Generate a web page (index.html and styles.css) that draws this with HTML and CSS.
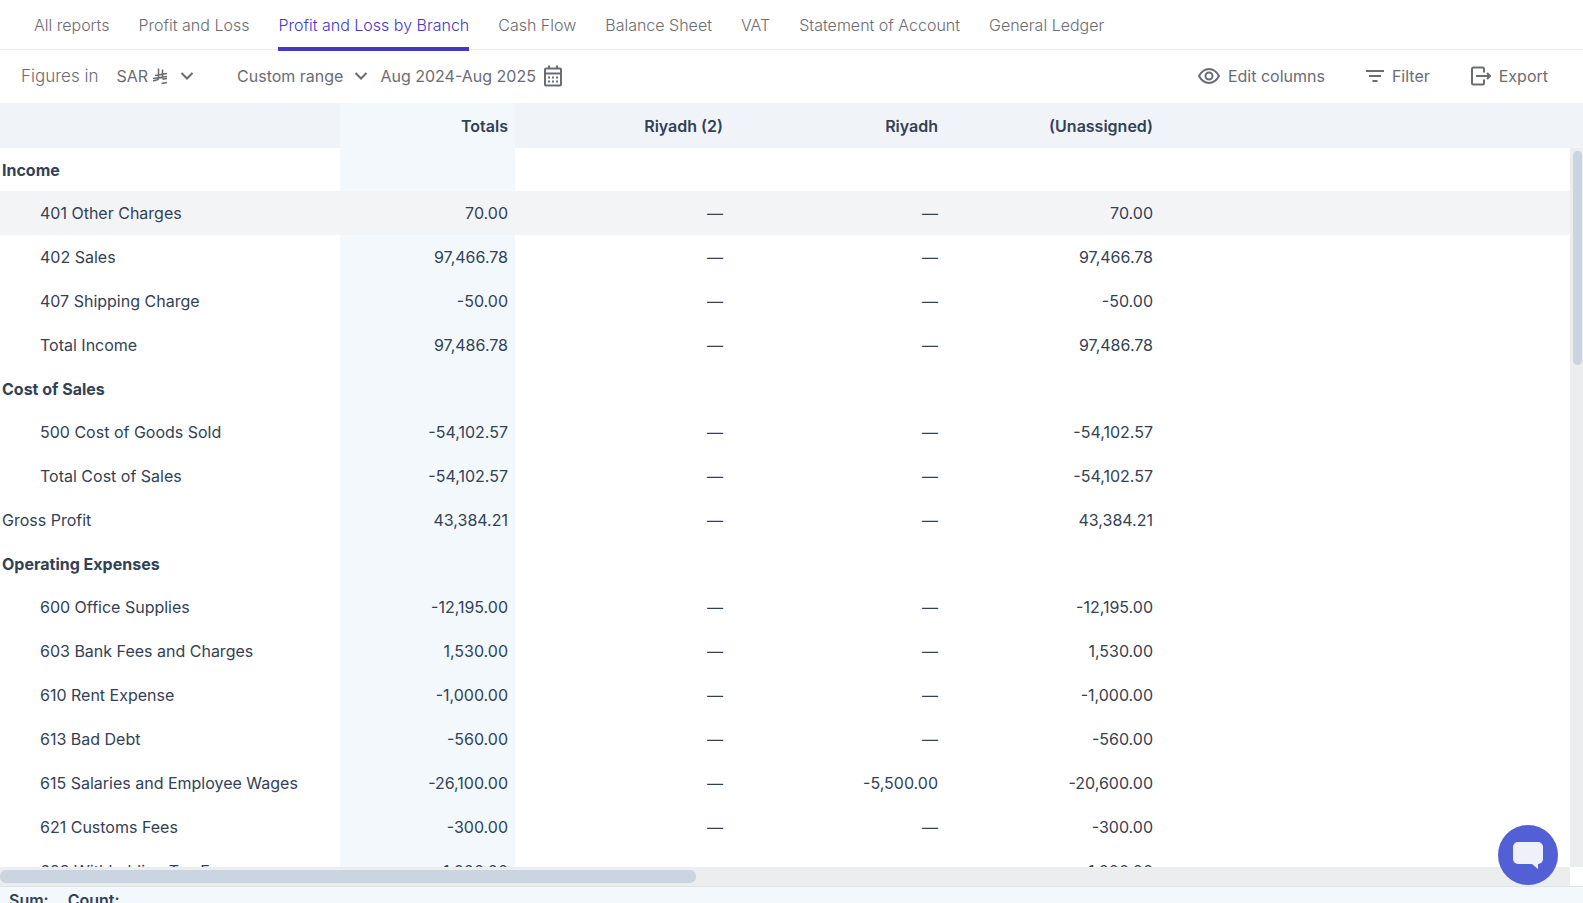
FILE: index.html
```html
<!DOCTYPE html>
<html lang="en">
<head>
    <meta charset="UTF-8">
    <meta name="viewport" content="width=device-width, initial-scale=1.0">
    <title>Profit and Loss by Branch</title>
    <link rel="stylesheet" href="styles.css">
</head>
<body>

    <nav class="tabs">
        <a href="#">All reports</a>
        <a href="#">Profit and Loss</a>
        <a href="#" class="active">Profit and Loss by Branch</a>
        <a href="#">Cash Flow</a>
        <a href="#">Balance Sheet</a>
        <a href="#">VAT</a>
        <a href="#">Statement of Account</a>
        <a href="#">General Ledger</a>
    </nav>

    <div class="toolbar">
        <span class="figures">Figures in</span>
        <button type="button" class="tool currency">
            SAR
            <svg class="riyal" width="16" height="18" viewBox="0 0 16 18"><path d="M6.500 1.500v10q0 1-1 1.300L1 14M10.500 2.500v9M3 8.500L15 6.500M1 11.500L15 9.500M10.500 12.200l4.500-.7M9.500 16.500l5.500-1"/></svg>
            <svg class="chevron" width="14" height="14" viewBox="0 0 14 14"><path d="M1.500 4L7 9.500 12.500 4"/></svg>
        </button>
        <button type="button" class="tool range">
            Custom range
            <svg class="chevron" width="14" height="14" viewBox="0 0 14 14"><path d="M1.500 4L7 9.500 12.500 4"/></svg>
        </button>
        <button type="button" class="tool dates">
            Aug 2024-Aug 2025
            <svg width="18" height="22" viewBox="0 0 18 22"><path d="M2 3.500h14a1 1 0 0 1 1 1v15a1 1 0 0 1-1 1H2a1 1 0 0 1-1-1v-15a1 1 0 0 1 1-1zM1 8.500h16M5 .5v3M13 .5v3"/><path d="M4 12.500h2M8 12.500h2M12 12.500h2M4 16.500h2M8 16.500h2M12 16.500h2"/></svg>
        </button>
        <div class="actions">
            <button type="button" class="tool">
                <svg width="22" height="16" viewBox="0 0 22 16"><path d="M1 8C3.500 3.500 6.500 1 11 1s7.500 2.500 10 7C18.500 12.500 15.500 15 11 15S3.500 12.500 1 8z"/><circle cx="11" cy="8" r="3.500"/></svg>
                Edit columns
            </button>
            <button type="button" class="tool">
                <svg width="18" height="14" viewBox="0 0 18 14"><path d="M0 2h18M3 7h12M6.500 12h5"/></svg>
                Filter
            </button>
            <button type="button" class="tool">
                <svg width="20" height="20" viewBox="0 0 20 20"><path d="M13 6.500V3a1.500 1.500 0 0 0-1.500-1.500h-9A1.500 1.500 0 0 0 1 3v14a1.500 1.500 0 0 0 1.500 1.500h9A1.500 1.500 0 0 0 13 17v-3.500M5 10h14"/><path d="M16 7l3 3-3 3"/></svg>
                Export
            </button>
        </div>
    </div>

    <main class="report">
        <div class="table-area">
            <table>
                <colgroup>
                    <col class="name-col">
                    <col class="totals-col">
                    <col class="branch-col">
                    <col class="branch-col">
                    <col class="branch-col">
                    <col>
                </colgroup>
                <thead>
                    <tr><th></th><th>Totals</th><th>Riyadh (2)</th><th>Riyadh</th><th>(Unassigned)</th><th></th></tr>
                </thead>
                <tbody>
                    <tr class="group"><th>Income</th><td></td><td></td><td></td><td></td><td></td></tr>
                    <tr class="item hovered"><th>401 Other Charges</th><td>70.00</td><td>—</td><td>—</td><td>70.00</td><td></td></tr>
                    <tr class="item"><th>402 Sales</th><td>97,466.78</td><td>—</td><td>—</td><td>97,466.78</td><td></td></tr>
                    <tr class="item"><th>407 Shipping Charge</th><td>-50.00</td><td>—</td><td>—</td><td>-50.00</td><td></td></tr>
                    <tr class="item"><th>Total Income</th><td>97,486.78</td><td>—</td><td>—</td><td>97,486.78</td><td></td></tr>
                    <tr class="group"><th>Cost of Sales</th><td></td><td></td><td></td><td></td><td></td></tr>
                    <tr class="item"><th>500 Cost of Goods Sold</th><td>-54,102.57</td><td>—</td><td>—</td><td>-54,102.57</td><td></td></tr>
                    <tr class="item"><th>Total Cost of Sales</th><td>-54,102.57</td><td>—</td><td>—</td><td>-54,102.57</td><td></td></tr>
                    <tr><th>Gross Profit</th><td>43,384.21</td><td>—</td><td>—</td><td>43,384.21</td><td></td></tr>
                    <tr class="group"><th>Operating Expenses</th><td></td><td></td><td></td><td></td><td></td></tr>
                    <tr class="item"><th>600 Office Supplies</th><td>-12,195.00</td><td>—</td><td>—</td><td>-12,195.00</td><td></td></tr>
                    <tr class="item"><th>603 Bank Fees and Charges</th><td>1,530.00</td><td>—</td><td>—</td><td>1,530.00</td><td></td></tr>
                    <tr class="item"><th>610 Rent Expense</th><td>-1,000.00</td><td>—</td><td>—</td><td>-1,000.00</td><td></td></tr>
                    <tr class="item"><th>613 Bad Debt</th><td>-560.00</td><td>—</td><td>—</td><td>-560.00</td><td></td></tr>
                    <tr class="item"><th>615 Salaries and Employee Wages</th><td>-26,100.00</td><td>—</td><td>-5,500.00</td><td>-20,600.00</td><td></td></tr>
                    <tr class="item"><th>621 Customs Fees</th><td>-300.00</td><td>—</td><td>—</td><td>-300.00</td><td></td></tr>
                    <tr class="item"><th>623 Withholding Tax F</th><td>-1,000.00</td><td>—</td><td>—</td><td>-1,000.00</td><td></td></tr>
                </tbody>
            </table>
        </div>
        <div class="scroll-y"><div class="thumb"></div></div>
        <div class="scroll-x"><div class="thumb"></div></div>
    </main>

    <footer class="summary">
        <span>Sum:</span>
        <span>Count:</span>
    </footer>

    <button type="button" class="chat" aria-label="Open chat">
        <svg width="30" height="28" viewBox="0 0 30 28"><path d="M5 1h20a5 5 0 0 1 5 5v12a5 5 0 0 1-5 5v5l-6-5H5a5 5 0 0 1-5-5V6a5 5 0 0 1 5-5z"/></svg>
    </button>

</body>
</html>
```
FILE: styles.css
```css
* {
    box-sizing: border-box;
}
body {
    margin: 0;
    height: 100vh;
    display: flex;
    flex-direction: column;
    overflow: hidden;
    font-family: Inter, sans-serif;
    font-size: 16px;
    color: #334155;
    background-color: white;
}

/* report tabs */
.tabs {
    display: flex;
    flex: none;
    gap: 29px;
    height: 50px;
    padding: 0 34px;
    border-bottom: 1px solid #ebecef;
}
.tabs a {
    height: 51px;
    line-height: 50px;
    font-weight: 300;
    color: #6b6c72;
    text-decoration: none;
    white-space: nowrap;
}
.tabs .active {
    color: #4338ca;
    border-bottom: 4px solid #4338ca;
}

/* toolbar */
.toolbar {
    display: flex;
    flex: none;
    align-items: center;
    height: 53px;
    padding: 0 35px 2px 21px;
    color: #6b6c72;
}
.figures {
    margin-right: 18px;
    font-size: 17px;
    font-weight: 300;
}
.tool {
    display: flex;
    align-items: center;
    gap: 8px;
    padding: 0;
    border: none;
    background: none;
    font: inherit;
    color: inherit;
    white-space: nowrap;
    cursor: pointer;
}
.tool svg {
    fill: none;
    stroke: currentColor;
    stroke-width: 2;
}
.tool .riyal {
    stroke-width: 1.5;
}
.currency {
    gap: 4px;
    margin-right: 43px;
}
.currency .chevron {
    margin-left: 8px;
}
.range {
    gap: 11px;
    margin-right: 12px;
}
.actions {
    display: flex;
    gap: 41px;
    margin-left: auto;
}

/* table with its scroll bars */
.report {
    display: grid;
    flex: 1;
    min-height: 0;
    grid-template-columns: 1fr 13px;
    grid-template-rows: 45px 1fr 19px;
}
.table-area {
    grid-area: 1 / 1 / 3 / 3;
    min-height: 0;
    overflow: hidden;
}
table {
    width: 100%;
    table-layout: fixed;
    border-collapse: collapse;
}
.name-col {
    width: 340px;
}
.totals-col {
    width: 175px;
}
.branch-col {
    width: 215px;
}
th,
td {
    height: 44px;
    padding: 0 7px 0 0;
    font-weight: 400;
    text-align: right;
    white-space: nowrap;
}
thead th {
    height: 45px;
    font-weight: 600;
    background-color: #f0f4f9;
}
tbody th {
    padding-left: 2px;
    text-align: left;
}
.item th {
    padding-left: 40px;
}
.group th,
.group td {
    height: 43px;
}
.group th {
    font-weight: 700;
}
th:nth-child(2),
td:nth-child(2) {
    background-color: #f2f8fb;
}
.hovered th,
.hovered td {
    background-color: #f3f4f6;
}
.scroll-y {
    grid-area: 2 / 2;
    padding: 3px 1px 3px 3px;
    background-color: #ebedef;
}
.scroll-x {
    grid-area: 3 / 1;
    padding: 3px 0;
    background-color: #ebedef;
}
.thumb {
    border-radius: 6px;
    background-color: #cbd5e1;
}
.scroll-y .thumb {
    height: 30%;
}
.scroll-x .thumb {
    width: 44.3%;
    height: 100%;
}

/* bottom bar */
.summary {
    display: flex;
    flex: none;
    gap: 19px;
    height: 17px;
    padding: 3px 9px;
    border-top: 1px solid #dbe4ec;
    font-weight: 600;
    background-color: #f2f8fb;
}

/* chat launcher */
.chat {
    position: fixed;
    right: 25px;
    bottom: 18px;
    display: flex;
    align-items: center;
    justify-content: center;
    width: 60px;
    height: 60px;
    border: none;
    border-radius: 50%;
    background-color: #535fd5;
    cursor: pointer;
}
.chat svg {
    fill: #f0f1f8;
}
```
